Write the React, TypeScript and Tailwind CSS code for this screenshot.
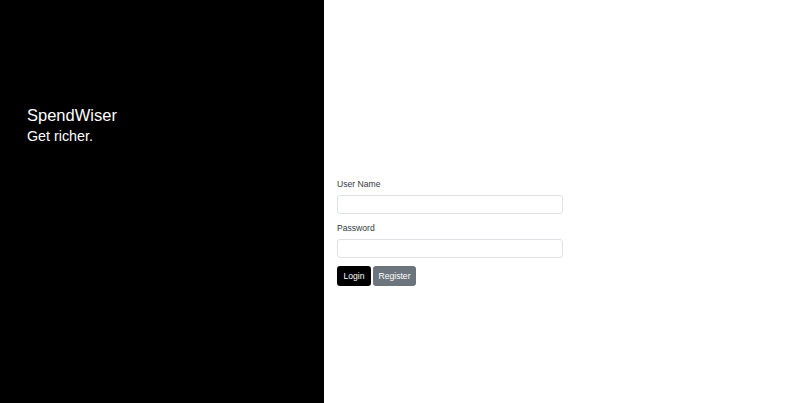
import React from "react";

export default function App() {
  return (
    <div
      className="flex w-full h-[403px] bg-white"
      style={{ fontFamily: '"Liberation Sans", Arial, sans-serif' }}
    >
      <div className="w-[324px] shrink-0 bg-black text-white pl-[27px] pt-[105px]">
        <div className="text-[16.5px] leading-[20px]">SpendWiser</div>
        <div className="mt-[3px] text-[14.3px] leading-[17px]">Get richer.</div>
      </div>
      <div className="flex-1 pl-[13px] pt-[178px]">
        <form className="w-[226px]" onSubmit={(e) => e.preventDefault()}>
          <label className="block text-[8.6px] leading-[13px] text-[#333a40]">User Name</label>
          <input
            type="text"
            className="mt-[4px] block w-full h-[19px] rounded-[3px] border border-[#dee2e6] bg-white outline-none"
          />
          <label className="mt-[8px] block text-[8.6px] leading-[13px] text-[#333a40]">Password</label>
          <input
            type="password"
            className="mt-[4px] block w-full h-[19px] rounded-[3px] border border-[#dee2e6] bg-white outline-none"
          />
          <div className="mt-[8px] flex gap-[2px]">
            <button
              type="submit"
              className="h-[20px] w-[34px] rounded-[3px] bg-black text-white text-[8.6px] leading-none"
            >
              Login
            </button>
            <button
              type="button"
              className="h-[20px] w-[43px] rounded-[3px] bg-[#6c757d] text-white text-[8.6px] leading-none"
            >
              Register
            </button>
          </div>
        </form>
      </div>
    </div>
  );
}
